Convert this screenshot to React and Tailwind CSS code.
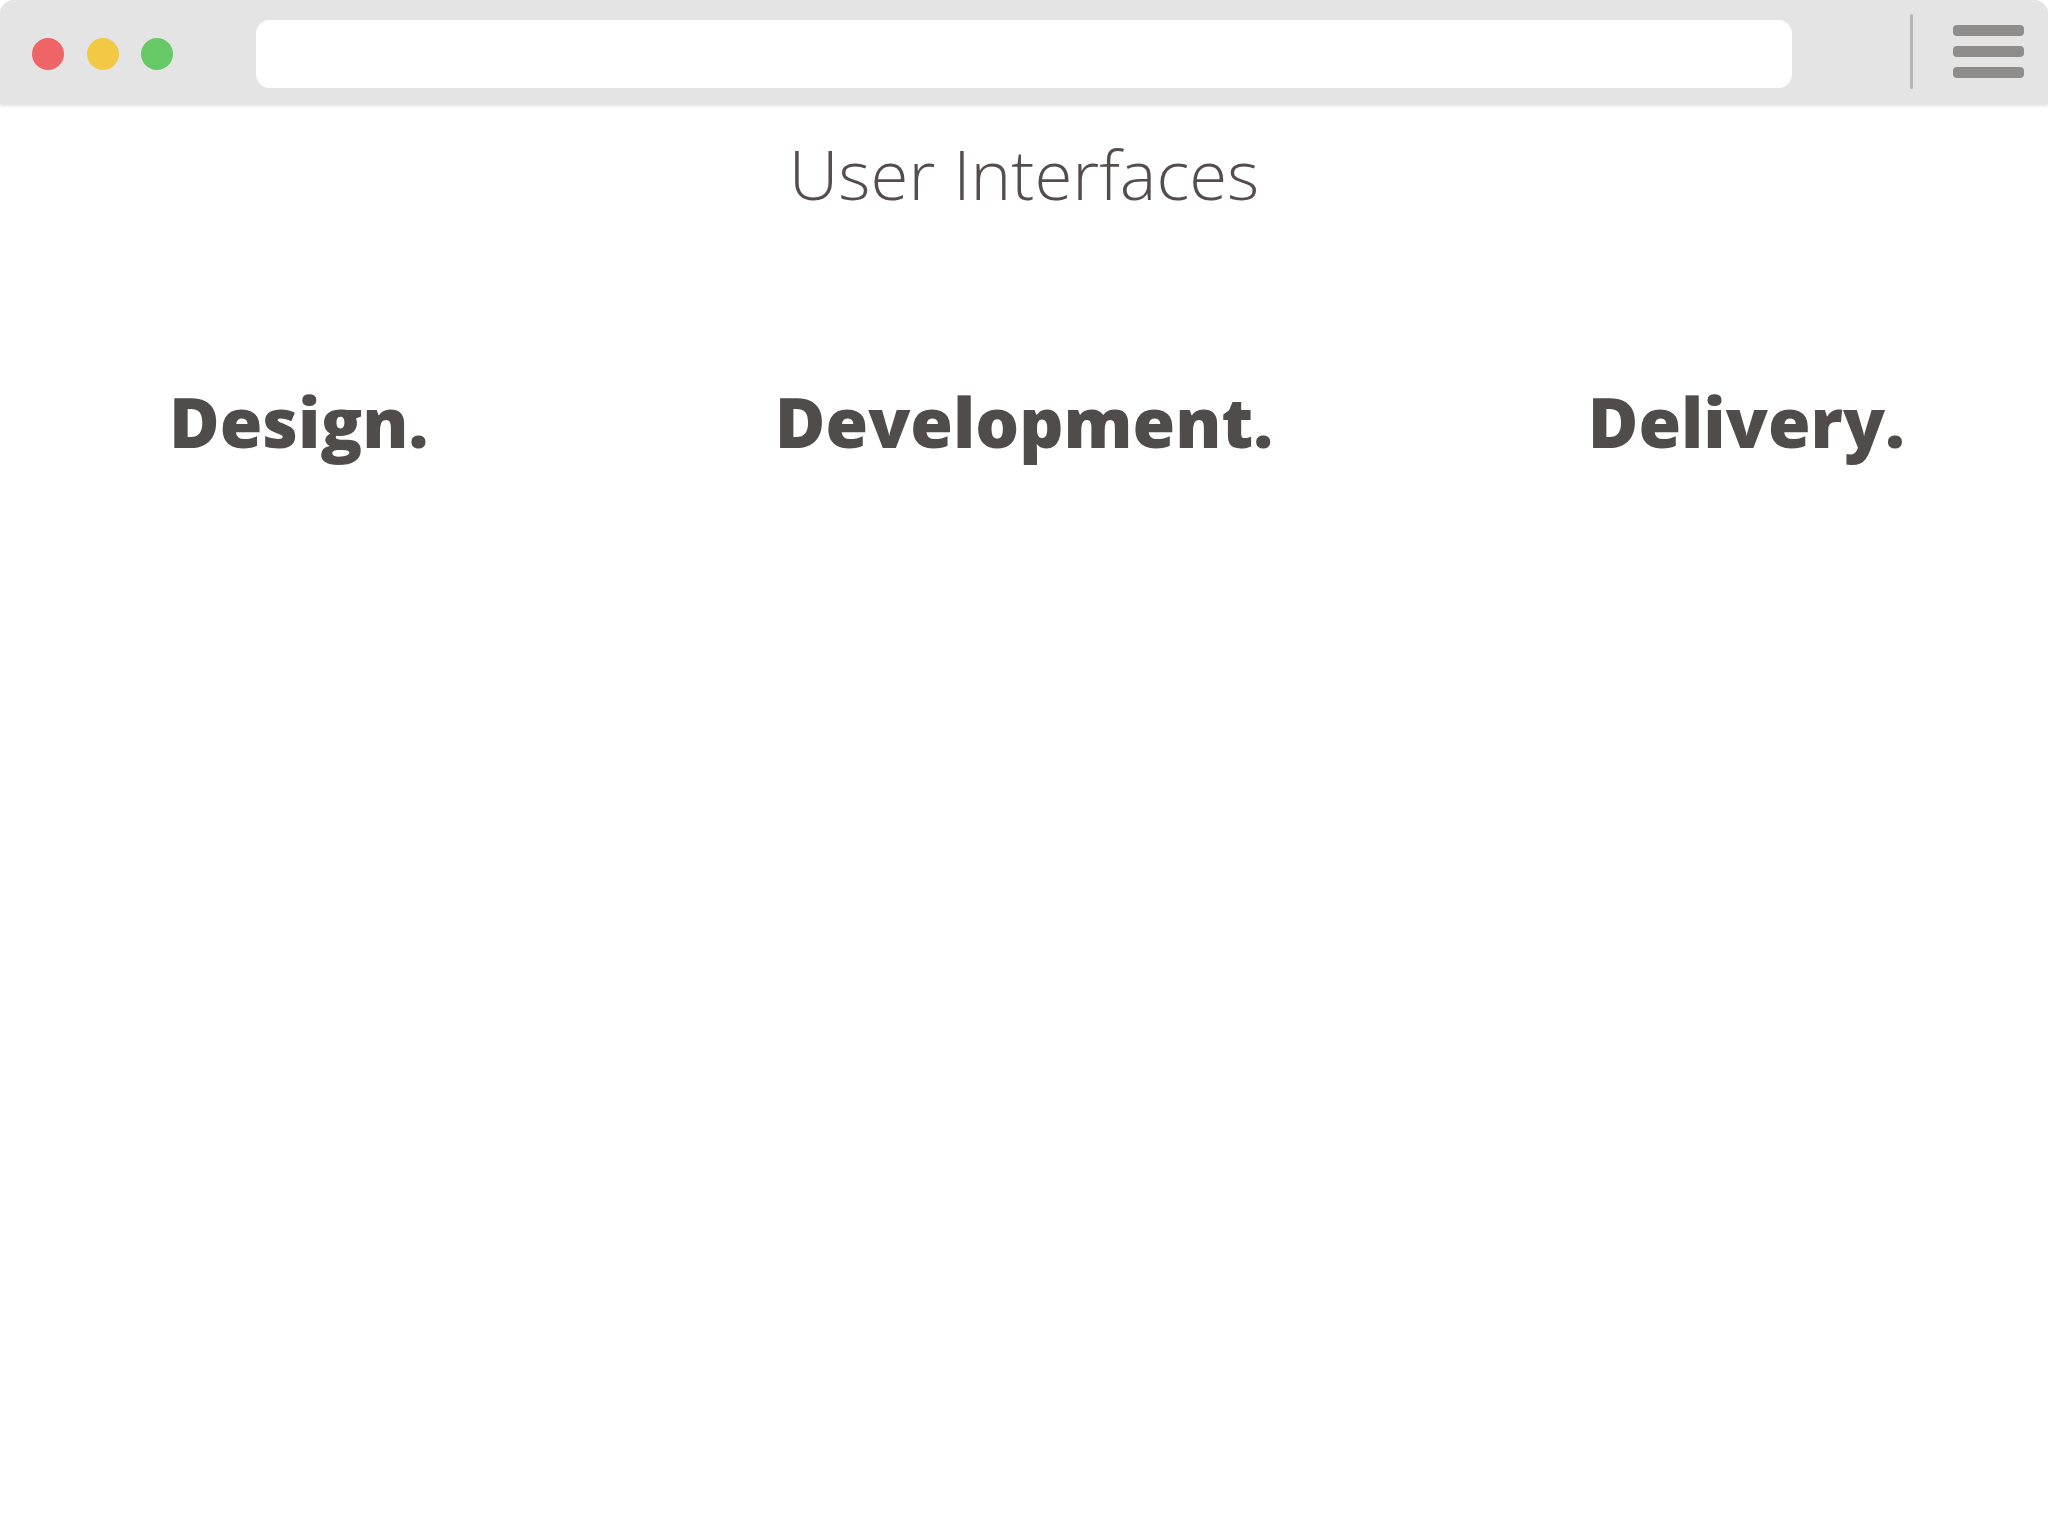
export default function App() {
  return (
    <div className="w-[2048px] h-[1536px] bg-white overflow-hidden" style={{ fontFamily: '"Open Sans", "Liberation Sans", sans-serif' }}>
      <div className="relative h-[104px] bg-[#e4e4e4] rounded-t-[14px] shadow-[0_2px_3px_rgba(0,0,0,0.12)] flex items-center">
        <div className="flex items-center pl-[32px] pt-[3px] gap-[24px] w-[256px] self-stretch">
          <div className="w-[32px] h-[32px] rounded-full bg-[#ef6567]" />
          <div className="w-[32px] h-[32px] rounded-full bg-[#f2c944] -ml-[1px]" />
          <div className="w-[32px] h-[32px] rounded-full bg-[#66c965] -ml-[2px]" />
        </div>
        <div className="w-[1536px] h-[68px] bg-white rounded-[14px] mt-[4px]" />
        <div className="w-[121px] flex justify-end">
          <div className="w-[3px] h-[75px] bg-[#b7b5b5] rounded-full -mt-[2px]" />
        </div>
        <div className="ml-[40px] flex flex-col gap-[10px] -mt-[1px]">
          <div className="w-[71px] h-[11px] rounded-[4px] bg-[#8e8d8b]" />
          <div className="w-[71px] h-[11px] rounded-[4px] bg-[#8e8d8b]" />
          <div className="w-[71px] h-[11px] rounded-[4px] bg-[#8e8d8b]" />
        </div>
      </div>
      <h1 className="mt-[35px] text-center text-[69px] leading-none font-light text-[#554d4d]">User Interfaces</h1>
      <div className="mt-[179px] grid grid-cols-3 text-[69px] leading-none font-extrabold text-[#514c4c]">
        <div className="pl-[169px] text-left">Design.</div>
        <div className="text-center">Development.</div>
        <div className="pr-[143px] text-right">Delivery.</div>
      </div>
    </div>
  );
}
